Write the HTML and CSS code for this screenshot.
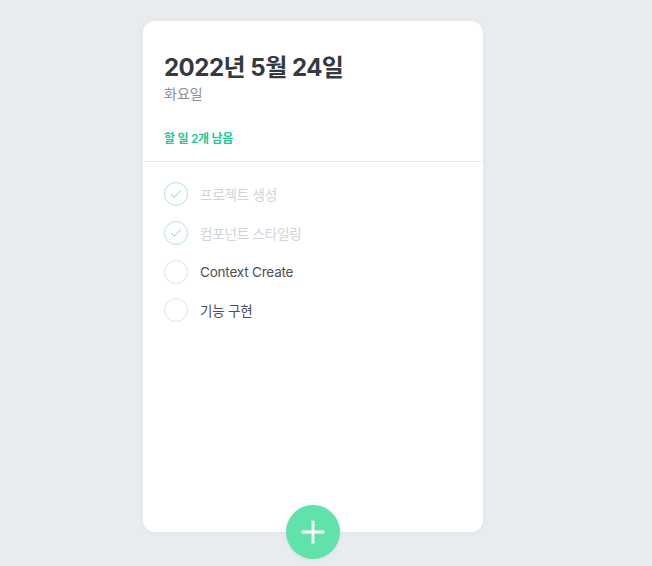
FILE: index.html
```html
<!DOCTYPE html>
<html lang="ko">
<head>
<meta charset="utf-8">
<link rel="stylesheet" href="styles.css">
</head>
<body>
<div class="card">
  <div class="head">
    <h1 class="title">2022년 5월 24일</h1>
    <div class="day">화요일</div>
    <div class="left">할 일 2개 남음</div>
  </div>
  <div class="list">
    <div class="item done">
      <div class="check"><svg viewBox="0 0 24 24" width="14" height="14"><path d="M4 12.5l5 5L20 6.5" fill="none" stroke="#5fd9a3" stroke-width="1.6" stroke-linecap="round" stroke-linejoin="round"/></svg></div>
      <div class="text">프로젝트 생성</div>
    </div>
    <div class="item done">
      <div class="check"><svg viewBox="0 0 24 24" width="14" height="14"><path d="M4 12.5l5 5L20 6.5" fill="none" stroke="#5fd9a3" stroke-width="1.6" stroke-linecap="round" stroke-linejoin="round"/></svg></div>
      <div class="text">컴포넌트 스타일링</div>
    </div>
    <div class="item">
      <div class="check"></div>
      <div class="text">Context Create</div>
    </div>
    <div class="item">
      <div class="check"></div>
      <div class="text">기능 구현</div>
    </div>
  </div>
  <button class="add" aria-label="추가"><svg viewBox="0 0 24 24" width="26" height="26"><path d="M12 1.5v21M1.5 12h21" stroke="#fff" stroke-width="2.6"/></svg></button>
</div>
</body>
</html>
```

FILE: styles.css
```css
* { box-sizing: border-box; }
html, body { margin: 0; padding: 0; }
body {
  background: #e9ecef;
  font-family: Inter, "Noto Sans CJK KR", "Noto Sans", sans-serif;
  height: 566px;
  overflow: hidden;
}
.card {
  position: relative;
  width: 340px;
  height: 511px;
  margin: 21px 0 0 143px;
  background: #fff;
  border-radius: 12px;
  box-shadow: 0 0 6px rgba(0, 0, 0, 0.04);
  display: flex;
  flex-direction: column;
}
.head {
  height: 141px;
  padding: 32px 21px 0;
  border-bottom: 1px solid #e9ecef;
}
.title {
  margin: 0;
  font-size: 24px;
  line-height: 30px;
  font-weight: 700;
  color: #343a40;
  letter-spacing: -0.5px;
}
.day {
  font-size: 14px;
  line-height: 20px;
  color: #868e96;
  margin-top: 1px;
}
.left {
  margin-top: 26px;
  font-size: 12px;
  line-height: 18px;
  font-weight: 600;
  color: #20c997;
  letter-spacing: -0.3px;
}
.list {
  padding: 13px 21px 0;
}
.item {
  height: 38.67px;
  display: flex;
  align-items: center;
}
.check {
  width: 24px;
  height: 24px;
  border-radius: 50%;
  border: 1px solid #dee2e6;
  display: flex;
  align-items: center;
  justify-content: center;
  margin-right: 12px;
  flex: none;
}
.done .check { border-color: #a9ebcf; }
.text {
  font-size: 13.5px;
  color: #495057;
  letter-spacing: -0.2px;
}
.done .text { color: #ced4da; }
.add {
  position: absolute;
  left: 50%;
  bottom: 0;
  transform: translate(-50%, 50%);
  width: 54px;
  height: 54px;
  border-radius: 50%;
  border: none;
  padding: 0;
  background: #5fe3ab;
  display: flex;
  align-items: center;
  justify-content: center;
  box-shadow: 0 0 4px rgba(0, 0, 0, 0.08);
}
```
